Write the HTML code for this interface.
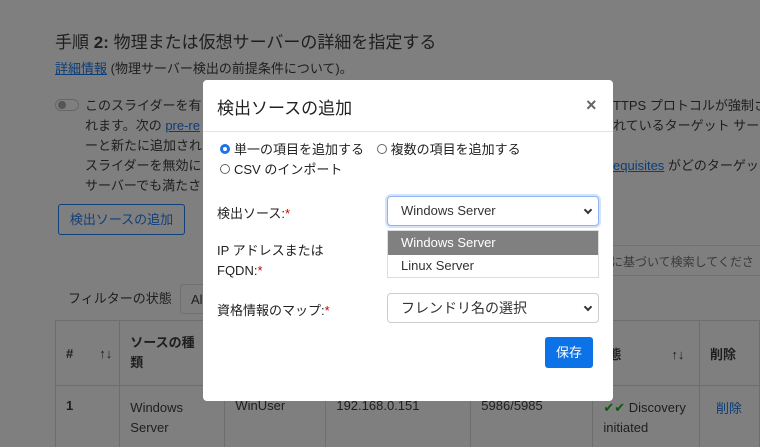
<!DOCTYPE html>
<html><head><meta charset="utf-8"><style>
*{box-sizing:border-box;margin:0;padding:0}
html,body{width:760px;height:447px;overflow:hidden}
body{background:#7f7f7f;font-family:"Liberation Sans","Noto Sans CJK JP",sans-serif;color:#1e1e1e;position:relative;font-size:13px}
.a{position:absolute;white-space:nowrap}
.lnk{color:#0b3d7a;text-decoration:underline}
.modal{position:absolute;left:203px;top:80px;width:410px;height:321px;background:#fff;border-radius:4px}
.sel{position:absolute;border:1px solid #ccc;border-radius:4px;background:#fff;font-size:13px;color:#333;padding-left:13px;line-height:28px}
.chev{position:absolute;right:7px;top:10px;width:6px;height:6px;border-right:2px solid #333;border-bottom:2px solid #333;transform:rotate(45deg)}
td,th{border:1px solid #6e6e6e}
</style></head><body>
<div class="a" style="left:55px;top:28px;font-size:17px">手順 <b>2:</b> 物理または仮想サーバーの詳細を指定する</div>
<div class="a" style="left:55px;top:58px;font-size:13px"><span class="lnk">詳細情報</span> (物理サーバー検出の前提条件について)。</div>
<div class="a" style="left:55px;top:99px;width:24px;height:12px;border:1px solid #666;border-radius:6px"><div style="width:8px;height:8px;border-radius:50%;background:#555;margin:1px 2px"></div></div>
<div class="a" style="left:85px;top:96px;font-size:13px;line-height:20px">このスライダーを有<br>れます。次の <span class="lnk">pre-re</span><br>ーと新たに追加され<br>スライダーを無効に<br>サーバーでも満たさ</div>
<div class="a" style="left:613px;top:96px;font-size:13px;line-height:20px">TTPS プロトコルが強制さ<br>れているターゲット サー<br><br><span class="lnk">equisites</span> がどのターゲッ</div>
<div class="a" style="left:58px;top:204px;width:127px;height:31px;border:1px solid #10407a;border-radius:3px;color:#10407a;font-size:13px;text-align:center;line-height:29px">検出ソースの追加</div>
<div class="a" style="left:600px;top:245px;width:170px;height:31px;border:1px solid #707070;color:#3a3a3a;padding:7px 10px;font-size:12px">に基づいて検索してくださ</div>
<div class="a" style="left:68px;top:288px;font-size:13px">フィルターの状態</div>
<div class="a" style="left:180px;top:284px;width:40px;height:30px;border:1px solid #707070;border-radius:3px;padding:7px 10px">Al</div>
<table class="a" style="left:55px;top:320px;border-collapse:collapse;font-size:13px;table-layout:fixed">
<tr style="height:65px"><th style="width:65px;text-align:left;padding-left:10px">#<span style="margin-left:26px;font-weight:normal">↑↓</span></th><th style="width:108px;text-align:left;padding-left:10px;line-height:20px">ソースの種<br>類</th><th style="width:104px"></th><th style="width:149px"></th><th style="width:126px"></th><th style="width:107px;text-align:left;padding-left:2px">状態<span style="margin-left:50px;font-weight:normal">↑↓</span></th><th style="width:60px;text-align:left;padding-left:10px">削除</th></tr>
<tr style="height:70px;vertical-align:top"><td style="padding:12px 10px"><b>1</b></td><td style="padding:12px 10px;line-height:20px">Windows<br>Server</td><td style="padding:12px 10px">WinUser</td><td style="padding:12px 10px">192.168.0.151</td><td style="padding:12px 10px">5986/5985</td><td style="padding:12px 10px;line-height:20px"><span style="color:#0a5a0a">✔✔</span> Discovery<br>initiated</td><td style="padding:12px 16px;color:#0b3d7a">削除</td></tr>
</table>
<div class="modal">
<div class="a" style="left:14px;top:14px;font-size:17px;color:#222">検出ソースの追加</div>
<div class="a" style="left:383px;top:15px;font-size:18px;color:#666;font-weight:bold">×</div>
<div class="a" style="left:0;top:51px;width:410px;border-top:1px solid #e3e3e3"></div>
<div class="a" style="left:17px;top:60px;font-size:13px;line-height:20px;color:#222"><span style="display:inline-block;width:10px;height:10px;border-radius:50%;border:3px solid #1a73e8;margin-right:4px"></span>単一の項目を追加する <span style="display:inline-block;width:10px;height:10px;border-radius:50%;border:1px solid #666;margin:0 4px 0 9px"></span>複数の項目を追加する<br><span style="display:inline-block;width:10px;height:10px;border-radius:50%;border:1px solid #666;margin-right:4px"></span>CSV のインポート</div>
<div class="a" style="left:14px;top:123px;color:#222">検出ソース:<span style="color:#c00">*</span></div>
<div class="a" style="left:14px;top:161px;line-height:20px;color:#222">IP アドレスまたは<br>FQDN:<span style="color:#c00">*</span></div>
<div class="a" style="left:14px;top:220px;color:#222">資格情報のマップ:<span style="color:#c00">*</span></div>
<div class="sel" style="left:184px;top:116px;width:212px;height:30px;border-color:#8fb4ef;box-shadow:0 0 0 2px #d4e3fb">Windows Server<span class="chev"></span></div>
<div class="a" style="left:184px;top:150px;width:212px;height:48px;border:1px solid #ddd;background:#fff;font-size:13px">
<div style="background:#808080;color:#fff;height:24px;line-height:24px;padding-left:13px">Windows Server</div>
<div style="color:#333;height:22px;line-height:22px;padding-left:13px">Linux Server</div></div>
<div class="sel" style="left:184px;top:213px;width:212px;height:30px;font-size:14px">フレンドリ名の選択<span class="chev"></span></div>
<div class="a" style="left:342px;top:257px;width:48px;height:31px;background:#0b72e7;border-radius:3px;color:#fff;text-align:center;line-height:31px;font-size:13px">保存</div>
</div>
</body></html>
